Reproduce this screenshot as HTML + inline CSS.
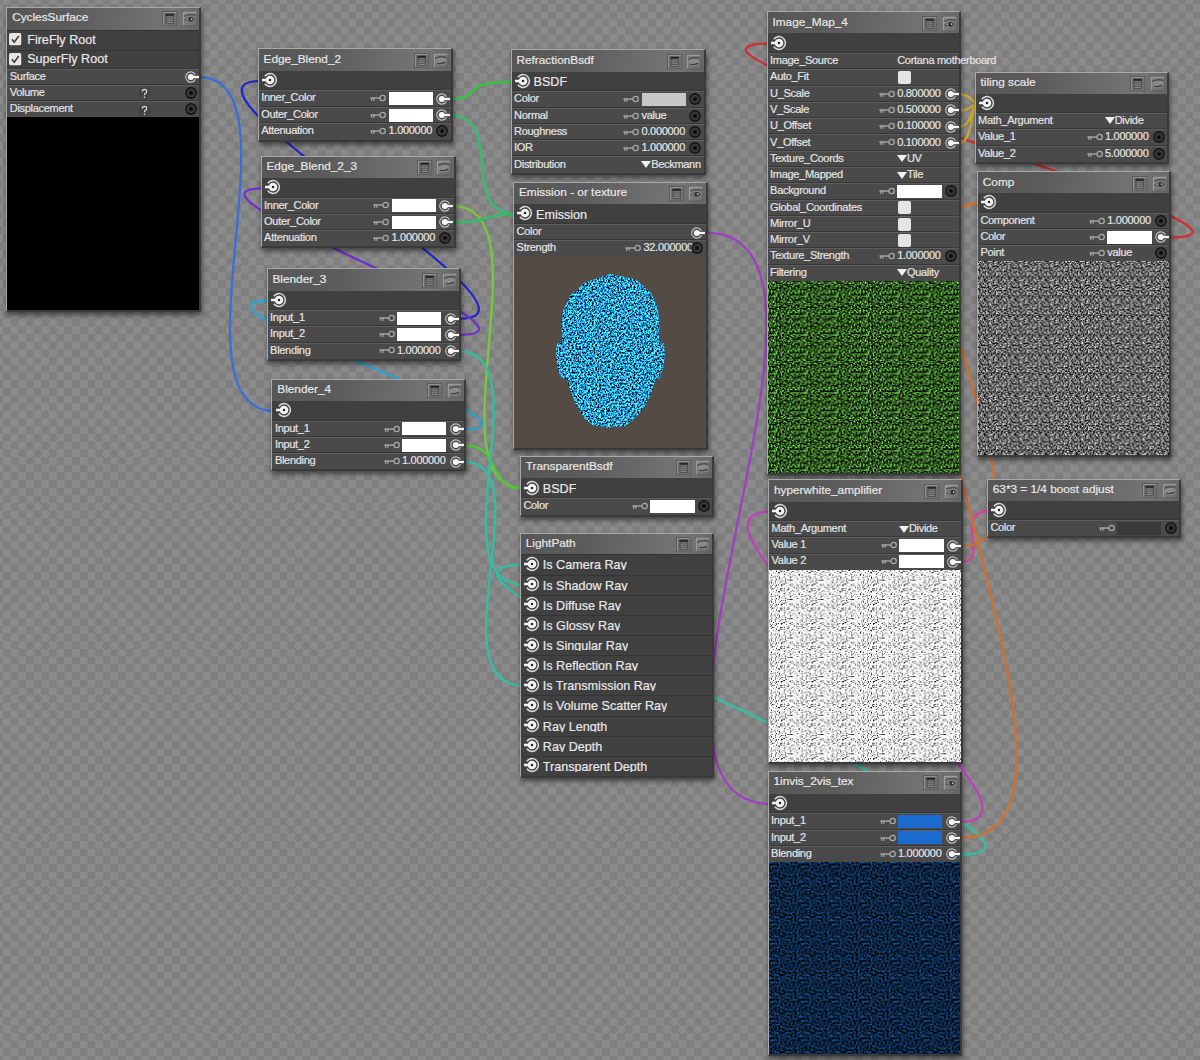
<!DOCTYPE html><html><head><meta charset="utf-8"><style>
*{box-sizing:border-box}
html,body{margin:0;padding:0}
body{width:1200px;height:1060px;overflow:hidden;position:relative;font-family:"Liberation Sans",sans-serif;
 background-color:#858585;
 background-image:repeating-conic-gradient(#8b8b8b 0 25%,#7f7f7f 0 50%);
 background-size:15.36px 15.36px;background-position:3px 3.9px}
#wires{position:absolute;left:0;top:0;z-index:1}
.n{position:absolute;z-index:2;background:#474747;border-top:1px solid #a9a9a9;border-left:1px solid #a9a9a9;
 border-right:2px solid #3a3a3a;border-bottom:2px solid #3a3a3a;box-shadow:1px 3px 5px rgba(0,0,0,.5)}
.t{position:absolute;left:0;right:0;top:0;color:#e8e8e8;font-size:11.8px;line-height:1.117;
 background:linear-gradient(100deg,#565656 0%,#5c5c5c 35%,#6e6e6e 70%,#757575 85%,#666 100%)}
.t span{position:absolute;left:5px;white-space:nowrap}
.r{position:absolute;left:0;right:0;background:linear-gradient(#5d5d5d 0 1px,#4a4a4a 1px);box-shadow:0 -1px 0 #383838;color:#e4e4e4;font-size:11px;line-height:1.117;letter-spacing:-0.3px}
.r .l{position:absolute;left:2.6px;white-space:nowrap}
.s{position:absolute;left:0;right:0;background:linear-gradient(#343434 0 1px,#404040 1px);}
.s.n0{background:#404040}
.s{color:#e8e8e8;font-size:12.6px;line-height:1.117}
.s .l{position:absolute;left:22px;white-space:nowrap;overflow:hidden}
.v{position:absolute;white-space:nowrap}
.sw{position:absolute;height:13px;width:44.4px}
.cb{position:absolute;width:13px;height:13px;background:#e4e4e4;border-radius:2px}
.img{position:absolute;left:0;right:0;overflow:hidden}
svg.u{position:absolute;overflow:visible}
.t span,.r .l,.r .v,.s .l{-webkit-text-stroke:0.2px currentColor}
.tri{position:absolute;width:0;height:0;border-left:5px solid transparent;border-right:5px solid transparent;border-top:7px solid #f2f2f2}
</style></head><body>
<svg width="0" height="0" style="position:absolute">
<defs>
<symbol id="os" viewBox="0 0 16 16">
 <path d="M2.82 4.27 A6.4 6.4 0 1 1 2.82 11.73" fill="none" stroke="#d6d6d6" stroke-width="1.55"/>
 <circle cx="8" cy="8" r="4.3" fill="#f2f2f2"/>
 <rect x="-0.6" y="6.75" width="8" height="2.5" fill="#f2f2f2"/>
 <circle cx="8" cy="8" r="1.25" fill="#222"/>
</symbol>
<symbol id="ps" viewBox="0 0 14 12">
 <path d="M10.42 3.84 A5.1 5.1 0 1 0 10.42 8.16" fill="none" stroke="#c4c4c4" stroke-width="1.1"/>
 <circle cx="5.8" cy="6" r="3.0" fill="#f6f6f6"/>
 <rect x="5.8" y="4.85" width="8.2" height="2.3" fill="#f6f6f6"/>
</symbol>
<symbol id="bs" viewBox="0 0 12 12">
 <circle cx="6" cy="6" r="5.9" fill="#161616"/>
 <circle cx="6" cy="6" r="4.3" fill="#3c3c3c"/>
 <circle cx="6" cy="6" r="2.7" fill="#262626"/>
 <circle cx="6" cy="6" r="1.35" fill="#000"/>
</symbol>
<symbol id="key" viewBox="0 0 16 8">
 <circle cx="12.6" cy="4" r="2.7" fill="none" stroke="#a8a8a8" stroke-width="1.25"/>
 <rect x="0.4" y="3.35" width="9.7" height="1.35" fill="#a8a8a8"/>
 <rect x="1.1" y="3.6" width="1.2" height="3.2" fill="#a8a8a8"/>
 <rect x="3.3" y="3.6" width="1.2" height="3.2" fill="#a8a8a8"/>
</symbol>
<symbol id="menu" viewBox="0 0 16 16">
 <rect x="0.5" y="0.5" width="15" height="15" fill="#707070" stroke="#585858"/>
 <path d="M1.5 14.5 V1.5 H14.5" fill="none" stroke="#969696" stroke-width="1"/>
 <rect x="3.6" y="2.9" width="8.6" height="10.4" fill="#4e4e4e"/>
 <rect x="3.6" y="2.9" width="8.6" height="1.9" fill="#262626"/>
 <rect x="4.6" y="5.6" width="6.6" height="1" fill="#8c8c8c"/>
 <rect x="4.6" y="7.6" width="6.6" height="1" fill="#8c8c8c"/>
 <rect x="4.6" y="9.5" width="6.6" height="1" fill="#8c8c8c"/>
 <rect x="4.6" y="11.4" width="6.6" height="1" fill="#8c8c8c"/>
</symbol>
<symbol id="eyeo" viewBox="0 0 16 16">
 <linearGradient id="eg" x1="0" y1="0" x2="1" y2="1"><stop offset="0" stop-color="#8c8c8c"/><stop offset="1" stop-color="#6c6c6c"/></linearGradient>
 <rect x="0.5" y="0.5" width="15" height="15" fill="url(#eg)" stroke="#5a5a5a"/>
 <path d="M1.2 15 V1.2 H15" fill="none" stroke="#ababab" stroke-width="1"/>
 <path d="M2.2 5.4 Q8 2.4 14 4.8" fill="none" stroke="#4a4a4a" stroke-width="1.3"/>
 <path d="M2.6 9.4 Q8 4.6 13.2 8.6 Q8 12 2.6 9.4Z" fill="#959595" stroke="#454545" stroke-width="0.8"/>
 <circle cx="9" cy="8.6" r="2.3" fill="#2c2c2c"/>
 <circle cx="9.9" cy="8.4" r="0.8" fill="#dcdcdc"/>
</symbol>
<symbol id="eyec" viewBox="0 0 16 16">
 <linearGradient id="egc" x1="0" y1="0" x2="1" y2="1"><stop offset="0" stop-color="#858585"/><stop offset="1" stop-color="#6a6a6a"/></linearGradient>
 <rect x="0.5" y="0.5" width="15" height="15" fill="url(#egc)" stroke="#5a5a5a"/>
 <path d="M1.2 15 V1.2 H15" fill="none" stroke="#a8a8a8" stroke-width="1"/>
 <ellipse cx="8.2" cy="8.2" rx="5.6" ry="4.4" fill="#8a8a8a"/>
 <path d="M2.4 5.6 Q8 2.6 13.8 4.8" fill="none" stroke="#4e4e4e" stroke-width="1.3"/>
 <path d="M4.4 10.4 Q8.5 12 12.6 9.4" fill="none" stroke="#404040" stroke-width="1.4"/>
</symbol>
<symbol id="chk" viewBox="0 0 13 13">
 <rect x="0" y="0" width="13" height="13" rx="2" fill="#e6e6e6"/>
 <path d="M3 6.5 L5.4 9.5 L10.2 3.2" fill="none" stroke="#3a3a3a" stroke-width="1.6"/>
</symbol>
<symbol id="q" viewBox="0 0 13 13">
 <circle cx="6.5" cy="6.5" r="6.2" fill="#424242"/>
 <path d="M4.3 4.6 Q4.3 2.4 6.5 2.4 Q8.7 2.4 8.7 4.5 Q8.7 5.8 7.2 6.6 Q6.5 7.0 6.5 8.3" fill="none" stroke="#dedede" stroke-width="1.2"/>
 <circle cx="6.5" cy="10.3" r="0.8" fill="#dedede"/>
</symbol>
</defs>
</svg>
<svg id="wires" width="1200" height="1060"><path d="M199.2 77.25 C304.2 77.25 165.3 411.2 275.3 411.2" fill="none" stroke="#3b6fd6" stroke-width="2.3"/><path d="M459 318.65 C574 318.65 146.6 80.85 261.6 80.85" fill="none" stroke="#2828c8" stroke-width="2.3"/><path d="M459 334.9 C574 334.9 149.5 188.25 264.5 188.25" fill="none" stroke="#7030d0" stroke-width="2.3"/><path d="M464 429.15 C574 429.15 155.5 300.75 270.5 300.75" fill="none" stroke="#28a4d0" stroke-width="2.3"/><path d="M450.6 98.85 C485.6 98.85 454.5 81.9 514.5 81.9" fill="none" stroke="#2ec83c" stroke-width="2.3"/><path d="M450.6 115.35 C505.6 115.35 457 214.3 517 214.3" fill="none" stroke="#30c070" stroke-width="2.3"/><path d="M453.5 206.1 C548.5 206.1 428.8 488.45 523.8 488.45" fill="none" stroke="#78c83c" stroke-width="2.3"/><path d="M453.5 222.3 C493.5 222.3 477 214.3 517 214.3" fill="none" stroke="#30c060" stroke-width="2.3"/><path d="M464 445.4 C504 445.4 483.8 488.45 523.8 488.45" fill="none" stroke="#50c838" stroke-width="2.3"/><path d="M459 351.1 C544 351.1 433.8 584.92 523.8 584.92" fill="none" stroke="#30c0a0" stroke-width="2.3"/><path d="M464 461.6 C544 461.6 433.8 685.67 523.8 685.67" fill="none" stroke="#30c0a0" stroke-width="2.3"/><path d="M960 854.35 C1135 854.35 343.8 564.77 523.8 564.77" fill="none" stroke="#30c0a0" stroke-width="2.3"/><path d="M705.5 232.7 C885.5 232.7 591.5 803.9 771.5 803.9" fill="none" stroke="#a040c0" stroke-width="2.3"/><path d="M1169.3 237.45 C1329.3 237.45 605.5 43.6 770.5 43.6" fill="none" stroke="#d03030" stroke-width="2.3"/><path d="M959.2 94.25 C973.2 94.25 970.5 103.45 978.5 103.45" fill="none" stroke="#c8a830" stroke-width="2.3"/><path d="M959.2 110.51 C973.2 110.51 970.5 103.45 978.5 103.45" fill="none" stroke="#c8a830" stroke-width="2.3"/><path d="M959.2 126.77 C973.2 126.77 970.5 103.45 978.5 103.45" fill="none" stroke="#c8a830" stroke-width="2.3"/><path d="M959.2 143.03 C973.2 143.03 970.5 103.45 978.5 103.45" fill="none" stroke="#c8a830" stroke-width="2.3"/><path d="M961.2 562 C991.2 562 950.8 510.75 990.8 510.75" fill="none" stroke="#d8409c" stroke-width="2.3"/><path d="M960 821.8 C1085 821.8 642 511.5 772 511.5" fill="none" stroke="#c040b8" stroke-width="2.3"/><path d="M961.2 545.9 C1076.2 545.9 860.8 203.25 980.8 203.25" fill="none" stroke="#d07030" stroke-width="2.3"/><path d="M960 838.15 C1145 838.15 800.8 203.25 980.8 203.25" fill="none" stroke="#d07030" stroke-width="2.3"/></svg><div class="n" style="left:6.2px;top:7.1px;width:195px;height:304.7px"><div class="t" style="height:21.6px"><span style="top:3.4px">CyclesSurface</span><svg class="u" style="left:155.2px;top:3.4px" width="15.5" height="15.5"><use href="#menu"/></svg><svg class="u" style="left:174.9px;top:3.4px" width="15.5" height="15.5"><use href="#eyeo"/></svg></div><div class="s" style="top:21.6px;height:19.9px"><svg class="u" style="left:2.2px;top:3.65px" width="12.5" height="12.5"><use href="#chk"/></svg><span class="l" style="left:20px;top:2.95px">FireFly Root</span></div><div class="s" style="top:41.5px;height:19.2px"><svg class="u" style="left:2.2px;top:3.3px" width="12.5" height="12.5"><use href="#chk"/></svg><span class="l" style="left:20px;top:2.6px">SuperFly Root</span></div><div class="r" style="top:60.7px;height:16.1px"><span class="l" style="top:0.95px">Surface</span><svg class="u" style="left:177.7px;top:2.45px" width="14" height="12"><use href="#ps"/></svg></div><div class="r" style="top:76.8px;height:16.4px"><span class="l" style="top:1.1px">Volume</span><svg class="u" style="left:177.6px;top:2.2px" width="12" height="12"><use href="#bs"/></svg><svg class="u" style="left:130.6px;top:2.6px" width="13" height="13"><use href="#q"/></svg></div><div class="r" style="top:93.2px;height:16.2px"><span class="l" style="top:1px">Displacement</span><svg class="u" style="left:177.6px;top:2.1px" width="12" height="12"><use href="#bs"/></svg><svg class="u" style="left:130.6px;top:2.5px" width="13" height="13"><use href="#q"/></svg></div><div class="img" style="top:109.4px;height:192.3px"><div style="background:#000;height:100%"></div></div></div>
<div class="n" style="left:257.6px;top:48.4px;width:195px;height:93.4px"><div class="t" style="height:21.5px"><span style="top:3.4px">Edge_Blend_2</span><svg class="u" style="left:155.2px;top:3.4px" width="15.5" height="15.5"><use href="#menu"/></svg><svg class="u" style="left:174.9px;top:3.4px" width="15.5" height="15.5"><use href="#eyec"/></svg></div><div class="s n0" style="top:21.5px;height:19.3px"><svg class="u" style="left:3.3px;top:1.15px" width="16" height="16"><use href="#os"/></svg><span class="l" style="top:3.55px;height:12.1px"></span></div><div class="r" style="top:40.8px;height:16.5px"><span class="l" style="top:1.15px">Inner_Color</span><svg class="u" style="left:111.7px;top:4.05px" width="16" height="8"><use href="#key"/></svg><div class="sw" style="left:130px;top:1.95px;background:#ffffff"></div><svg class="u" style="left:177.7px;top:2.65px" width="14" height="12"><use href="#ps"/></svg></div><div class="r" style="top:57.3px;height:16.5px"><span class="l" style="top:1.15px">Outer_Color</span><svg class="u" style="left:111.7px;top:4.05px" width="16" height="8"><use href="#key"/></svg><div class="sw" style="left:130px;top:1.95px;background:#ffffff"></div><svg class="u" style="left:177.7px;top:2.65px" width="14" height="12"><use href="#ps"/></svg></div><div class="r" style="top:73.8px;height:16.6px"><span class="l" style="top:1.2px">Attenuation</span><svg class="u" style="left:111.7px;top:4.1px" width="16" height="8"><use href="#key"/></svg><span class="v" style="left:130px;top:1.2px">1.000000</span><svg class="u" style="left:177.6px;top:2.3px" width="12" height="12"><use href="#bs"/></svg></div></div>
<div class="n" style="left:260.5px;top:155.9px;width:195px;height:92.4px"><div class="t" style="height:21.4px"><span style="top:3.4px">Edge_Blend_2_3</span><svg class="u" style="left:155.2px;top:3.4px" width="15.5" height="15.5"><use href="#menu"/></svg><svg class="u" style="left:174.9px;top:3.4px" width="15.5" height="15.5"><use href="#eyec"/></svg></div><div class="s n0" style="top:21.4px;height:19.3px"><svg class="u" style="left:3.3px;top:1.15px" width="16" height="16"><use href="#os"/></svg><span class="l" style="top:3.55px;height:12.1px"></span></div><div class="r" style="top:40.7px;height:16.2px"><span class="l" style="top:1px">Inner_Color</span><svg class="u" style="left:111.7px;top:3.9px" width="16" height="8"><use href="#key"/></svg><div class="sw" style="left:130px;top:1.8px;background:#ffffff"></div><svg class="u" style="left:177.7px;top:2.5px" width="14" height="12"><use href="#ps"/></svg></div><div class="r" style="top:56.9px;height:16.2px"><span class="l" style="top:1px">Outer_Color</span><svg class="u" style="left:111.7px;top:3.9px" width="16" height="8"><use href="#key"/></svg><div class="sw" style="left:130px;top:1.8px;background:#ffffff"></div><svg class="u" style="left:177.7px;top:2.5px" width="14" height="12"><use href="#ps"/></svg></div><div class="r" style="top:73.1px;height:16.3px"><span class="l" style="top:1.05px">Attenuation</span><svg class="u" style="left:111.7px;top:3.95px" width="16" height="8"><use href="#key"/></svg><span class="v" style="left:130px;top:1.05px">1.000000</span><svg class="u" style="left:177.6px;top:2.15px" width="12" height="12"><use href="#bs"/></svg></div></div>
<div class="n" style="left:266.5px;top:268.4px;width:194.5px;height:92.4px"><div class="t" style="height:21.4px"><span style="top:3.4px">Blender_3</span><svg class="u" style="left:154.7px;top:3.4px" width="15.5" height="15.5"><use href="#menu"/></svg><svg class="u" style="left:174.4px;top:3.4px" width="15.5" height="15.5"><use href="#eyec"/></svg></div><div class="s n0" style="top:21.4px;height:19.3px"><svg class="u" style="left:3.3px;top:1.15px" width="16" height="16"><use href="#os"/></svg><span class="l" style="top:3.55px;height:12.1px"></span></div><div class="r" style="top:40.7px;height:16.3px"><span class="l" style="top:1.05px">Input_1</span><svg class="u" style="left:111.2px;top:3.95px" width="16" height="8"><use href="#key"/></svg><div class="sw" style="left:129.5px;top:1.85px;background:#ffffff"></div><svg class="u" style="left:177.2px;top:2.55px" width="14" height="12"><use href="#ps"/></svg></div><div class="r" style="top:57px;height:16.2px"><span class="l" style="top:1px">Input_2</span><svg class="u" style="left:111.2px;top:3.9px" width="16" height="8"><use href="#key"/></svg><div class="sw" style="left:129.5px;top:1.8px;background:#ffffff"></div><svg class="u" style="left:177.2px;top:2.5px" width="14" height="12"><use href="#ps"/></svg></div><div class="r" style="top:73.2px;height:16.2px"><span class="l" style="top:1px">Blending</span><svg class="u" style="left:111.2px;top:3.9px" width="16" height="8"><use href="#key"/></svg><span class="v" style="left:129.5px;top:1px">1.000000</span><svg class="u" style="left:177.2px;top:2.5px" width="14" height="12"><use href="#ps"/></svg></div></div>
<div class="n" style="left:271.3px;top:378.5px;width:194.7px;height:92.8px"><div class="t" style="height:21.7px"><span style="top:3.4px">Blender_4</span><svg class="u" style="left:154.9px;top:3.4px" width="15.5" height="15.5"><use href="#menu"/></svg><svg class="u" style="left:174.6px;top:3.4px" width="15.5" height="15.5"><use href="#eyec"/></svg></div><div class="s n0" style="top:21.7px;height:19.4px"><svg class="u" style="left:3.3px;top:1.2px" width="16" height="16"><use href="#os"/></svg><span class="l" style="top:3.6px;height:12.1px"></span></div><div class="r" style="top:41.1px;height:16.3px"><span class="l" style="top:1.05px">Input_1</span><svg class="u" style="left:111.4px;top:3.95px" width="16" height="8"><use href="#key"/></svg><div class="sw" style="left:129.7px;top:1.85px;background:#ffffff"></div><svg class="u" style="left:177.4px;top:2.55px" width="14" height="12"><use href="#ps"/></svg></div><div class="r" style="top:57.4px;height:16.2px"><span class="l" style="top:1px">Input_2</span><svg class="u" style="left:111.4px;top:3.9px" width="16" height="8"><use href="#key"/></svg><div class="sw" style="left:129.7px;top:1.8px;background:#ffffff"></div><svg class="u" style="left:177.4px;top:2.5px" width="14" height="12"><use href="#ps"/></svg></div><div class="r" style="top:73.6px;height:16.2px"><span class="l" style="top:1px">Blending</span><svg class="u" style="left:111.4px;top:3.9px" width="16" height="8"><use href="#key"/></svg><span class="v" style="left:129.7px;top:1px">1.000000</span><svg class="u" style="left:177.4px;top:2.5px" width="14" height="12"><use href="#ps"/></svg></div></div>
<div class="n" style="left:510.5px;top:49.3px;width:195px;height:125.7px"><div class="t" style="height:21.7px"><span style="top:3.4px">RefractionBsdf</span><svg class="u" style="left:155.2px;top:3.4px" width="15.5" height="15.5"><use href="#menu"/></svg><svg class="u" style="left:174.9px;top:3.4px" width="15.5" height="15.5"><use href="#eyec"/></svg></div><div class="s n0" style="top:21.7px;height:19.2px"><svg class="u" style="left:3.3px;top:1.1px" width="16" height="16"><use href="#os"/></svg><span class="l" style="top:3.5px;height:12.1px">BSDF</span></div><div class="r" style="top:40.9px;height:16.5px"><span class="l" style="top:1.15px">Color</span><svg class="u" style="left:111.7px;top:4.05px" width="16" height="8"><use href="#key"/></svg><div class="sw" style="left:130px;top:1.95px;background:#c8c8c8"></div><svg class="u" style="left:177.6px;top:2.25px" width="12" height="12"><use href="#bs"/></svg></div><div class="r" style="top:57.4px;height:16.5px"><span class="l" style="top:1.15px">Normal</span><svg class="u" style="left:111.7px;top:4.05px" width="16" height="8"><use href="#key"/></svg><span class="v" style="left:130px;top:1.15px">value</span><svg class="u" style="left:177.6px;top:2.25px" width="12" height="12"><use href="#bs"/></svg></div><div class="r" style="top:73.9px;height:16.1px"><span class="l" style="top:0.95px">Roughness</span><svg class="u" style="left:111.7px;top:3.85px" width="16" height="8"><use href="#key"/></svg><span class="v" style="left:130px;top:0.95px">0.000000</span><svg class="u" style="left:177.6px;top:2.05px" width="12" height="12"><use href="#bs"/></svg></div><div class="r" style="top:90px;height:16.2px"><span class="l" style="top:1px">IOR</span><svg class="u" style="left:111.7px;top:3.9px" width="16" height="8"><use href="#key"/></svg><span class="v" style="left:130px;top:1px">1.000000</span><svg class="u" style="left:177.6px;top:2.1px" width="12" height="12"><use href="#bs"/></svg></div><div class="r" style="top:106.2px;height:16.5px"><span class="l" style="top:1.15px">Distribution</span><i class="tri" style="left:129.8px;top:4.75px"></i><span class="v" style="left:139.7px;top:1.15px">Beckmann</span></div></div>
<div class="n" style="left:513px;top:182px;width:194.5px;height:268.3px"><div class="t" style="height:20.8px"><span style="top:3.4px">Emission - or texture</span><svg class="u" style="left:154.7px;top:3.4px" width="15.5" height="15.5"><use href="#menu"/></svg><svg class="u" style="left:174.4px;top:3.4px" width="15.5" height="15.5"><use href="#eyeo"/></svg></div><div class="s n0" style="top:20.8px;height:20.4px"><svg class="u" style="left:3.3px;top:1.7px" width="16" height="16"><use href="#os"/></svg><span class="l" style="top:4.1px;height:12.1px">Emission</span></div><div class="r" style="top:41.2px;height:16.2px"><span class="l" style="top:1px">Color</span><svg class="u" style="left:177.2px;top:2.5px" width="14" height="12"><use href="#ps"/></svg></div><div class="r" style="top:57.4px;height:15.6px"><span class="l" style="top:0.7px">Strength</span><svg class="u" style="left:111.2px;top:3.6px" width="16" height="8"><use href="#key"/></svg><span class="v" style="left:129.5px;top:0.7px">32.000000</span><svg class="u" style="left:177.1px;top:1.8px" width="12" height="12"><use href="#bs"/></svg></div><div class="img" style="top:73px;height:192.3px"><svg width="196" height="196" style="display:block"><rect width="196" height="196" fill="#544c44"/><filter id="fcy" x="0" y="0" width="100%" height="100%" color-interpolation-filters="sRGB"><feTurbulence type="fractalNoise" baseFrequency="0.55" numOctaves="3" seed="9"/><feColorMatrix type="matrix" values="0.8 0 0 0 -0.25  2.8 0 0 0 -0.82  3.4 0 0 0 -0.88  0 0 0 0 1"/></filter><clipPath id="hc"><path d="M96.4 17.8 L70.8 26.6 L56.3 39.5 L49.1 53.9 L47.5 65.1 L48.3 86 L42.7 87.5 L41.9 98.8 L43.5 111.6 L46.7 121.2 L53.1 123.6 L56.3 135.6 L62.7 150 L70.8 162.9 L78.8 169.3 L94.8 171.7 L110.9 170.1 L120.5 162.9 L130.1 151.7 L137.3 137.2 L141.3 124.4 L146.1 121.2 L149.3 111.6 L150.9 98.8 L150.1 87.5 L145.3 86 L145.3 65.1 L143.7 50.7 L136.5 36.3 L122.1 23.4Z"/></clipPath><g clip-path="url(#hc)"><rect width="196" height="196" filter="url(#fcy)"/></g></svg></div></div>
<div class="n" style="left:519.8px;top:456px;width:194.7px;height:61px"><div class="t" style="height:21.4px"><span style="top:3.4px">TransparentBsdf</span><svg class="u" style="left:154.9px;top:3.4px" width="15.5" height="15.5"><use href="#menu"/></svg><svg class="u" style="left:174.6px;top:3.4px" width="15.5" height="15.5"><use href="#eyec"/></svg></div><div class="s n0" style="top:21.4px;height:19.5px"><svg class="u" style="left:3.3px;top:1.25px" width="16" height="16"><use href="#os"/></svg><span class="l" style="top:3.65px;height:12.1px">BSDF</span></div><div class="r" style="top:40.9px;height:17.1px"><span class="l" style="top:1.45px">Color</span><svg class="u" style="left:111.4px;top:4.35px" width="16" height="8"><use href="#key"/></svg><div class="sw" style="left:129.7px;top:2.25px;background:#ffffff"></div><svg class="u" style="left:177.3px;top:2.55px" width="12" height="12"><use href="#bs"/></svg></div></div>
<div class="n" style="left:519.8px;top:532.5px;width:194.7px;height:245.55px"><div class="t" style="height:20.9px"><span style="top:3.4px">LightPath</span><svg class="u" style="left:154.9px;top:3.4px" width="15.5" height="15.5"><use href="#menu"/></svg><svg class="u" style="left:174.6px;top:3.4px" width="15.5" height="15.5"><use href="#eyec"/></svg></div><div class="s" style="top:20.9px;height:20.15px"><svg class="u" style="left:3.3px;top:1.57px" width="16" height="16"><use href="#os"/></svg><span class="l" style="top:3.97px;height:12.1px">Is Camera Ray</span></div><div class="s" style="top:41.05px;height:20.15px"><svg class="u" style="left:3.3px;top:1.57px" width="16" height="16"><use href="#os"/></svg><span class="l" style="top:3.97px;height:12.1px">Is Shadow Ray</span></div><div class="s" style="top:61.2px;height:20.15px"><svg class="u" style="left:3.3px;top:1.58px" width="16" height="16"><use href="#os"/></svg><span class="l" style="top:3.98px;height:12.1px">Is Diffuse Ray</span></div><div class="s" style="top:81.35px;height:20.15px"><svg class="u" style="left:3.3px;top:1.57px" width="16" height="16"><use href="#os"/></svg><span class="l" style="top:3.97px;height:12.1px">Is Glossy Ray</span></div><div class="s" style="top:101.5px;height:20.15px"><svg class="u" style="left:3.3px;top:1.57px" width="16" height="16"><use href="#os"/></svg><span class="l" style="top:3.97px;height:12.1px">Is Singular Ray</span></div><div class="s" style="top:121.65px;height:20.15px"><svg class="u" style="left:3.3px;top:1.57px" width="16" height="16"><use href="#os"/></svg><span class="l" style="top:3.97px;height:12.1px">Is Reflection Ray</span></div><div class="s" style="top:141.8px;height:20.15px"><svg class="u" style="left:3.3px;top:1.57px" width="16" height="16"><use href="#os"/></svg><span class="l" style="top:3.97px;height:12.1px">Is Transmission Ray</span></div><div class="s" style="top:161.95px;height:20.15px"><svg class="u" style="left:3.3px;top:1.57px" width="16" height="16"><use href="#os"/></svg><span class="l" style="top:3.97px;height:12.1px">Is Volume Scatter Ray</span></div><div class="s" style="top:182.1px;height:20.15px"><svg class="u" style="left:3.3px;top:1.58px" width="16" height="16"><use href="#os"/></svg><span class="l" style="top:3.98px;height:12.1px">Ray Length</span></div><div class="s" style="top:202.25px;height:20.15px"><svg class="u" style="left:3.3px;top:1.57px" width="16" height="16"><use href="#os"/></svg><span class="l" style="top:3.97px;height:12.1px">Ray Depth</span></div><div class="s" style="top:222.4px;height:20.15px"><svg class="u" style="left:3.3px;top:1.57px" width="16" height="16"><use href="#os"/></svg><span class="l" style="top:3.97px;height:12.1px">Transparent Depth</span></div></div>
<div class="n" style="left:766.5px;top:11.2px;width:194.7px;height:464.2px"><div class="t" style="height:21.2px"><span style="top:3.4px">Image_Map_4</span><svg class="u" style="left:154.9px;top:3.4px" width="15.5" height="15.5"><use href="#menu"/></svg><svg class="u" style="left:174.6px;top:3.4px" width="15.5" height="15.5"><use href="#eyeo"/></svg></div><div class="s n0" style="top:21.2px;height:19.8px"><svg class="u" style="left:3.3px;top:1.4px" width="16" height="16"><use href="#os"/></svg><span class="l" style="top:3.8px;height:12.1px"></span></div><div class="r" style="top:41px;height:16.26px"><span class="l" style="top:1.03px">Image_Source</span><span class="v" style="left:129.7px;top:1.03px">Cortana motherboard</span></div><div class="r" style="top:57.26px;height:16.26px"><span class="l" style="top:1.03px">Auto_Fit</span><div class="cb" style="left:130.1px;top:1.83px"></div></div><div class="r" style="top:73.52px;height:16.26px"><span class="l" style="top:1.03px">U_Scale</span><svg class="u" style="left:111.4px;top:3.93px" width="16" height="8"><use href="#key"/></svg><span class="v" style="left:129.7px;top:1.03px">0.800000</span><svg class="u" style="left:177.4px;top:2.53px" width="14" height="12"><use href="#ps"/></svg></div><div class="r" style="top:89.78px;height:16.26px"><span class="l" style="top:1.03px">V_Scale</span><svg class="u" style="left:111.4px;top:3.93px" width="16" height="8"><use href="#key"/></svg><span class="v" style="left:129.7px;top:1.03px">0.500000</span><svg class="u" style="left:177.4px;top:2.53px" width="14" height="12"><use href="#ps"/></svg></div><div class="r" style="top:106.04px;height:16.26px"><span class="l" style="top:1.03px">U_Offset</span><svg class="u" style="left:111.4px;top:3.93px" width="16" height="8"><use href="#key"/></svg><span class="v" style="left:129.7px;top:1.03px">0.100000</span><svg class="u" style="left:177.4px;top:2.53px" width="14" height="12"><use href="#ps"/></svg></div><div class="r" style="top:122.3px;height:16.26px"><span class="l" style="top:1.03px">V_Offset</span><svg class="u" style="left:111.4px;top:3.93px" width="16" height="8"><use href="#key"/></svg><span class="v" style="left:129.7px;top:1.03px">0.100000</span><svg class="u" style="left:177.4px;top:2.53px" width="14" height="12"><use href="#ps"/></svg></div><div class="r" style="top:138.56px;height:16.26px"><span class="l" style="top:1.03px">Texture_Coords</span><i class="tri" style="left:129.5px;top:4.63px"></i><span class="v" style="left:139.4px;top:1.03px">UV</span></div><div class="r" style="top:154.82px;height:16.26px"><span class="l" style="top:1.03px">Image_Mapped</span><i class="tri" style="left:129.5px;top:4.63px"></i><span class="v" style="left:139.4px;top:1.03px">Tile</span></div><div class="r" style="top:171.08px;height:16.26px"><span class="l" style="top:1.03px">Background</span><svg class="u" style="left:111.4px;top:3.93px" width="16" height="8"><use href="#key"/></svg><div class="sw" style="left:129.7px;top:1.83px;background:#ffffff"></div><svg class="u" style="left:177.3px;top:2.13px" width="12" height="12"><use href="#bs"/></svg></div><div class="r" style="top:187.34px;height:16.26px"><span class="l" style="top:1.03px">Global_Coordinates</span><div class="cb" style="left:130.1px;top:1.83px"></div></div><div class="r" style="top:203.6px;height:16.26px"><span class="l" style="top:1.03px">Mirror_U</span><div class="cb" style="left:130.1px;top:1.83px"></div></div><div class="r" style="top:219.86px;height:16.26px"><span class="l" style="top:1.03px">Mirror_V</span><div class="cb" style="left:130.1px;top:1.83px"></div></div><div class="r" style="top:236.12px;height:16.26px"><span class="l" style="top:1.03px">Texture_Strength</span><svg class="u" style="left:111.4px;top:3.93px" width="16" height="8"><use href="#key"/></svg><span class="v" style="left:129.7px;top:1.03px">1.000000</span><svg class="u" style="left:177.3px;top:2.13px" width="12" height="12"><use href="#bs"/></svg></div><div class="r" style="top:252.38px;height:16.26px"><span class="l" style="top:1.03px">Filtering</span><i class="tri" style="left:129.5px;top:4.63px"></i><span class="v" style="left:139.4px;top:1.03px">Quality</span></div><div class="img" style="top:268.64px;height:192.56px"><svg width="196" height="196" style="display:block"><defs><filter id="fgreen" x="0" y="0" width="100%" height="100%" color-interpolation-filters="sRGB"><feTurbulence type="fractalNoise" baseFrequency="0.6" numOctaves="2" seed="3"/><feColorMatrix type="matrix" values="1.3 0 0 0 -0.47  2.7 0 0 0 -1.02  1.0 0 0 0 -0.38  0 0 0 0 1"/></filter><pattern id="pgreen" width="30.7" height="19.3" patternUnits="userSpaceOnUse"><rect width="31" height="20" filter="url(#fgreen)"/></pattern></defs><rect width="196" height="196" fill="url(#pgreen)"/></svg></div></div>
<div class="n" style="left:974.5px;top:71.5px;width:194.5px;height:92.4px"><div class="t" style="height:21.1px"><span style="top:3.4px">tiling scale</span><svg class="u" style="left:154.7px;top:3.4px" width="15.5" height="15.5"><use href="#menu"/></svg><svg class="u" style="left:174.4px;top:3.4px" width="15.5" height="15.5"><use href="#eyec"/></svg></div><div class="s n0" style="top:21.1px;height:19.1px"><svg class="u" style="left:3.3px;top:1.05px" width="16" height="16"><use href="#os"/></svg><span class="l" style="top:3.45px;height:12.1px"></span></div><div class="r" style="top:40.2px;height:16.5px"><span class="l" style="top:1.15px">Math_Argument</span><i class="tri" style="left:129.3px;top:4.75px"></i><span class="v" style="left:139.2px;top:1.15px">Divide</span></div><div class="r" style="top:56.7px;height:16.4px"><span class="l" style="top:1.1px">Value_1</span><svg class="u" style="left:111.2px;top:4px" width="16" height="8"><use href="#key"/></svg><span class="v" style="left:129.5px;top:1.1px">1.000000</span><svg class="u" style="left:177.1px;top:2.2px" width="12" height="12"><use href="#bs"/></svg></div><div class="r" style="top:73.1px;height:16.3px"><span class="l" style="top:1.05px">Value_2</span><svg class="u" style="left:111.2px;top:3.95px" width="16" height="8"><use href="#key"/></svg><span class="v" style="left:129.5px;top:1.05px">5.000000</span><svg class="u" style="left:177.1px;top:2.15px" width="12" height="12"><use href="#bs"/></svg></div></div>
<div class="n" style="left:976.8px;top:171.3px;width:194.5px;height:285.3px"><div class="t" style="height:20.9px"><span style="top:3.4px">Comp</span><svg class="u" style="left:154.7px;top:3.4px" width="15.5" height="15.5"><use href="#menu"/></svg><svg class="u" style="left:174.4px;top:3.4px" width="15.5" height="15.5"><use href="#eyeo"/></svg></div><div class="s n0" style="top:20.9px;height:19.5px"><svg class="u" style="left:3.3px;top:1.25px" width="16" height="16"><use href="#os"/></svg><span class="l" style="top:3.65px;height:12.1px"></span></div><div class="r" style="top:40.4px;height:16.2px"><span class="l" style="top:1px">Component</span><svg class="u" style="left:111.2px;top:3.9px" width="16" height="8"><use href="#key"/></svg><span class="v" style="left:129.5px;top:1px">1.000000</span><svg class="u" style="left:177.1px;top:2.1px" width="12" height="12"><use href="#bs"/></svg></div><div class="r" style="top:56.6px;height:16.3px"><span class="l" style="top:1.05px">Color</span><svg class="u" style="left:111.2px;top:3.95px" width="16" height="8"><use href="#key"/></svg><div class="sw" style="left:129.5px;top:1.85px;background:#ffffff"></div><svg class="u" style="left:177.2px;top:2.55px" width="14" height="12"><use href="#ps"/></svg></div><div class="r" style="top:72.9px;height:16.1px"><span class="l" style="top:0.95px">Point</span><svg class="u" style="left:111.2px;top:3.85px" width="16" height="8"><use href="#key"/></svg><span class="v" style="left:129.5px;top:0.95px">value</span><svg class="u" style="left:177.1px;top:2.05px" width="12" height="12"><use href="#bs"/></svg></div><div class="img" style="top:89px;height:193.3px"><svg width="196" height="196" style="display:block"><defs><filter id="fgray" x="0" y="0" width="100%" height="100%" color-interpolation-filters="sRGB"><feTurbulence type="fractalNoise" baseFrequency="0.6" numOctaves="2" seed="7"/><feColorMatrix type="matrix" values="2.1 0 0 0 -0.65  2.1 0 0 0 -0.65  2.1 0 0 0 -0.65  0 0 0 0 1"/></filter><pattern id="pgray" width="30.7" height="19.3" patternUnits="userSpaceOnUse"><rect width="31" height="20" filter="url(#fgray)"/></pattern></defs><rect width="196" height="196" fill="url(#pgray)"/></svg></div></div>
<div class="n" style="left:986.8px;top:478.5px;width:194.2px;height:59.8px"><div class="t" style="height:21.5px"><span style="top:3.4px">63*3 = 1/4 boost adjust</span><svg class="u" style="left:154.4px;top:3.4px" width="15.5" height="15.5"><use href="#menu"/></svg><svg class="u" style="left:174.1px;top:3.4px" width="15.5" height="15.5"><use href="#eyec"/></svg></div><div class="s n0" style="top:21.5px;height:18.9px"><svg class="u" style="left:3.3px;top:0.95px" width="16" height="16"><use href="#os"/></svg><span class="l" style="top:3.35px;height:12.1px"></span></div><div class="r" style="top:40.4px;height:16.4px"><span class="l" style="top:1.1px">Color</span><svg class="u" style="left:110.9px;top:4px" width="16" height="8"><use href="#key"/></svg><div class="sw" style="left:129.2px;top:1.9px;background:#3a3a3a"></div><svg class="u" style="left:176.8px;top:2.2px" width="12" height="12"><use href="#bs"/></svg></div></div>
<div class="n" style="left:768px;top:479.3px;width:195.2px;height:285.2px"><div class="t" style="height:21.3px"><span style="top:3.4px">hyperwhite_amplifier</span><svg class="u" style="left:155.4px;top:3.4px" width="15.5" height="15.5"><use href="#menu"/></svg><svg class="u" style="left:175.1px;top:3.4px" width="15.5" height="15.5"><use href="#eyeo"/></svg></div><div class="s n0" style="top:21.3px;height:19.2px"><svg class="u" style="left:3.3px;top:1.1px" width="16" height="16"><use href="#os"/></svg><span class="l" style="top:3.5px;height:12.1px"></span></div><div class="r" style="top:40.5px;height:16.6px"><span class="l" style="top:1.2px">Math_Argument</span><i class="tri" style="left:130px;top:4.8px"></i><span class="v" style="left:139.9px;top:1.2px">Divide</span></div><div class="r" style="top:57.1px;height:16.2px"><span class="l" style="top:1px">Value 1</span><svg class="u" style="left:111.9px;top:3.9px" width="16" height="8"><use href="#key"/></svg><div class="sw" style="left:130.2px;top:1.8px;background:#ffffff"></div><svg class="u" style="left:177.9px;top:2.5px" width="14" height="12"><use href="#ps"/></svg></div><div class="r" style="top:73.3px;height:16px"><span class="l" style="top:0.9px">Value 2</span><svg class="u" style="left:111.9px;top:3.8px" width="16" height="8"><use href="#key"/></svg><div class="sw" style="left:130.2px;top:1.7px;background:#ffffff"></div><svg class="u" style="left:177.9px;top:2.4px" width="14" height="12"><use href="#ps"/></svg></div><div class="img" style="top:89.3px;height:192.9px"><svg width="196" height="196" style="display:block"><defs><filter id="fwhite" x="0" y="0" width="100%" height="100%" color-interpolation-filters="sRGB"><feTurbulence type="fractalNoise" baseFrequency="0.8" numOctaves="2" seed="11"/><feColorMatrix type="matrix" values="4.5 0 0 0 -1.05  4.5 0 0 0 -1.05  4.5 0 0 0 -1.05  0 0 0 0 1"/></filter><pattern id="pwhite" width="30.7" height="19.3" patternUnits="userSpaceOnUse"><rect width="31" height="20" filter="url(#fwhite)"/></pattern></defs><rect width="196" height="196" fill="url(#pwhite)"/></svg></div></div>
<div class="n" style="left:767.5px;top:771px;width:194.5px;height:285px"><div class="t" style="height:22px"><span style="top:3.4px">1invis_2vis_tex</span><svg class="u" style="left:154.7px;top:3.4px" width="15.5" height="15.5"><use href="#menu"/></svg><svg class="u" style="left:174.4px;top:3.4px" width="15.5" height="15.5"><use href="#eyeo"/></svg></div><div class="s n0" style="top:22px;height:19.2px"><svg class="u" style="left:3.3px;top:1.1px" width="16" height="16"><use href="#os"/></svg><span class="l" style="top:3.5px;height:12.1px"></span></div><div class="r" style="top:41.2px;height:16.4px"><span class="l" style="top:1.1px">Input_1</span><svg class="u" style="left:111.2px;top:4px" width="16" height="8"><use href="#key"/></svg><div class="sw" style="left:129.5px;top:1.9px;background:#1a6ad0"></div><svg class="u" style="left:177.2px;top:2.6px" width="14" height="12"><use href="#ps"/></svg></div><div class="r" style="top:57.6px;height:16.3px"><span class="l" style="top:1.05px">Input_2</span><svg class="u" style="left:111.2px;top:3.95px" width="16" height="8"><use href="#key"/></svg><div class="sw" style="left:129.5px;top:1.85px;background:#1a6ad0"></div><svg class="u" style="left:177.2px;top:2.55px" width="14" height="12"><use href="#ps"/></svg></div><div class="r" style="top:73.9px;height:16.1px"><span class="l" style="top:0.95px">Blending</span><svg class="u" style="left:111.2px;top:3.85px" width="16" height="8"><use href="#key"/></svg><span class="v" style="left:129.5px;top:0.95px">1.000000</span><svg class="u" style="left:177.2px;top:2.45px" width="14" height="12"><use href="#ps"/></svg></div><div class="img" style="top:90px;height:192px"><svg width="196" height="196" style="display:block"><defs><filter id="fblue" x="0" y="0" width="100%" height="100%" color-interpolation-filters="sRGB"><feTurbulence type="fractalNoise" baseFrequency="0.5" numOctaves="2" seed="5"/><feColorMatrix type="matrix" values="0.2 0 0 0 -0.06  0.8 0 0 0 -0.26  1.5 0 0 0 -0.50  0 0 0 0 1"/></filter><pattern id="pblue" width="30.7" height="19.3" patternUnits="userSpaceOnUse"><rect width="31" height="20" filter="url(#fblue)"/></pattern></defs><rect width="196" height="196" fill="url(#pblue)"/></svg></div></div></body></html>
